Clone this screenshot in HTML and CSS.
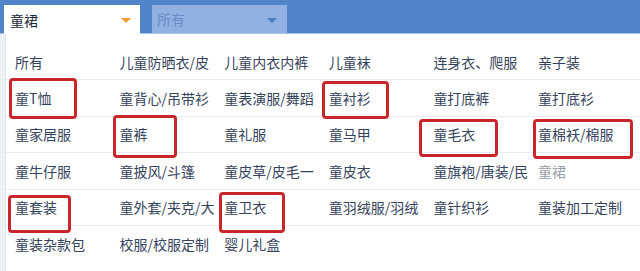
FILE: index.html
```html
<!DOCTYPE html>
<html lang="zh-CN">
<head>
<meta charset="utf-8">
<link rel="stylesheet" href="styles.css">
</head>
<body>
<div class="page">
  <header class="bar">
    <div class="select select-active">童裙<span class="caret caret-orange"></span></div>
    <div class="select select-muted">所有<span class="caret caret-blue"></span></div>
  </header>
  <div class="panel">
    <div class="row">
      <span class="cell">所有</span>
      <span class="cell">儿童防晒衣/皮</span>
      <span class="cell">儿童内衣内裤</span>
      <span class="cell">儿童袜</span>
      <span class="cell">连身衣、爬服</span>
      <span class="cell">亲子装</span>
    </div>
    <div class="row">
      <span class="cell mark mk-tshirt">童T恤</span>
      <span class="cell">童背心/吊带衫</span>
      <span class="cell">童表演服/舞蹈</span>
      <span class="cell mark mk-shirt">童衬衫</span>
      <span class="cell">童打底裤</span>
      <span class="cell">童打底衫</span>
    </div>
    <div class="row">
      <span class="cell">童家居服</span>
      <span class="cell mark mk-pants">童裤</span>
      <span class="cell">童礼服</span>
      <span class="cell">童马甲</span>
      <span class="cell mark mk-sweater">童毛衣</span>
      <span class="cell mark mk-padded">童棉袄/棉服</span>
    </div>
    <div class="row">
      <span class="cell">童牛仔服</span>
      <span class="cell">童披风/斗篷</span>
      <span class="cell">童皮草/皮毛一</span>
      <span class="cell">童皮衣</span>
      <span class="cell">童旗袍/唐装/民</span>
      <span class="cell cell-current">童裙</span>
    </div>
    <div class="row">
      <span class="cell mark mk-suit">童套装</span>
      <span class="cell">童外套/夹克/大</span>
      <span class="cell mark mk-hoodie">童卫衣</span>
      <span class="cell">童羽绒服/羽绒</span>
      <span class="cell">童针织衫</span>
      <span class="cell">童装加工定制</span>
    </div>
    <div class="row row-last">
      <span class="cell">童装杂款包</span>
      <span class="cell">校服/校服定制</span>
      <span class="cell">婴儿礼盒</span>
      <span class="cell"></span>
      <span class="cell"></span>
      <span class="cell"></span>
    </div>
  </div>
</div>
</body>
</html>
```

FILE: styles.css
```css
* { box-sizing: border-box; }

html, body {
  margin: 0;
  padding: 0;
}

body {
  width: 640px;
  height: 271px;
  overflow: hidden;
  background: #edf1f6;
  font-family: "Noto Sans CJK SC", "Noto Sans", sans-serif;
  font-size: 14px;
}

.page {
  display: flex;
  flex-direction: column;
  height: 100%;
}

.bar {
  height: 34px;
  background: #5085ca;
  border-bottom: 1px solid #a8c2e6;
  display: flex;
  align-items: flex-end;
  padding-left: 4px;
  gap: 12px;
}

.select {
  position: relative;
  width: 136px;
  height: 28px;
  display: flex;
  align-items: center;
  padding-left: 6px;
  font-size: 14px;
  line-height: 1;
}

.select-active {
  background: #ffffff;
  color: #1e2838;
  height: 29px;
  margin-bottom: -1px;
}

.select-muted {
  width: 135px;
  background: #92b0e2;
  color: #6a8cc4;
  padding-left: 5px;
}

.caret {
  position: absolute;
  top: 13px;
  width: 0;
  height: 0;
  border-left: 5px solid transparent;
  border-right: 5px solid transparent;
  border-top: 5px solid #f0a030;
}

.caret-orange {
  right: 9px;
  border-top-color: #f29a2e;
}

.caret-blue {
  right: 10px;
  border-top-color: #4a7cc2;
}

.panel {
  flex: 1;
  margin-left: 5px;
  background: #ffffff;
  border-left: 1px solid #dfe4eb;
  padding-top: 10px;
}

.row {
  display: grid;
  grid-template-columns: repeat(6, 104.6px);
  height: 36.4px;
  padding-left: 9px;
  border-bottom: 1px solid #e7eaef;
}

.row-last {
  border-bottom: none;
}

.cell {
  position: relative;
  display: flex;
  align-items: center;
  color: #36435c;
  white-space: nowrap;
  line-height: 1;
}

.cell-current {
  color: #9a9ea6;
}

.mark::after {
  content: "";
  position: absolute;
  border: 3px solid #c9262c;
  border-radius: 4px;
}

.mk-tshirt::after  { left: -6px;  top: -2px; width: 62px; height: 35px; }
.mk-shirt::after   { left: -7px;  top: 1px;  width: 61px; height: 32px; }
.mk-pants::after   { left: -7px;  top: -2px; width: 58px; height: 37px; }
.mk-sweater::after { left: -14px; top: 2px;  width: 73px; height: 32px; }
.mk-padded::after  { left: -5px;  top: 2px;  width: 94px; height: 34px; }
.mk-suit::after    { left: -7px;  top: 5px;  width: 57px; height: 32px; }
.mk-hoodie::after  { left: -5px;  top: 2px;  width: 60px; height: 35px; }
```
